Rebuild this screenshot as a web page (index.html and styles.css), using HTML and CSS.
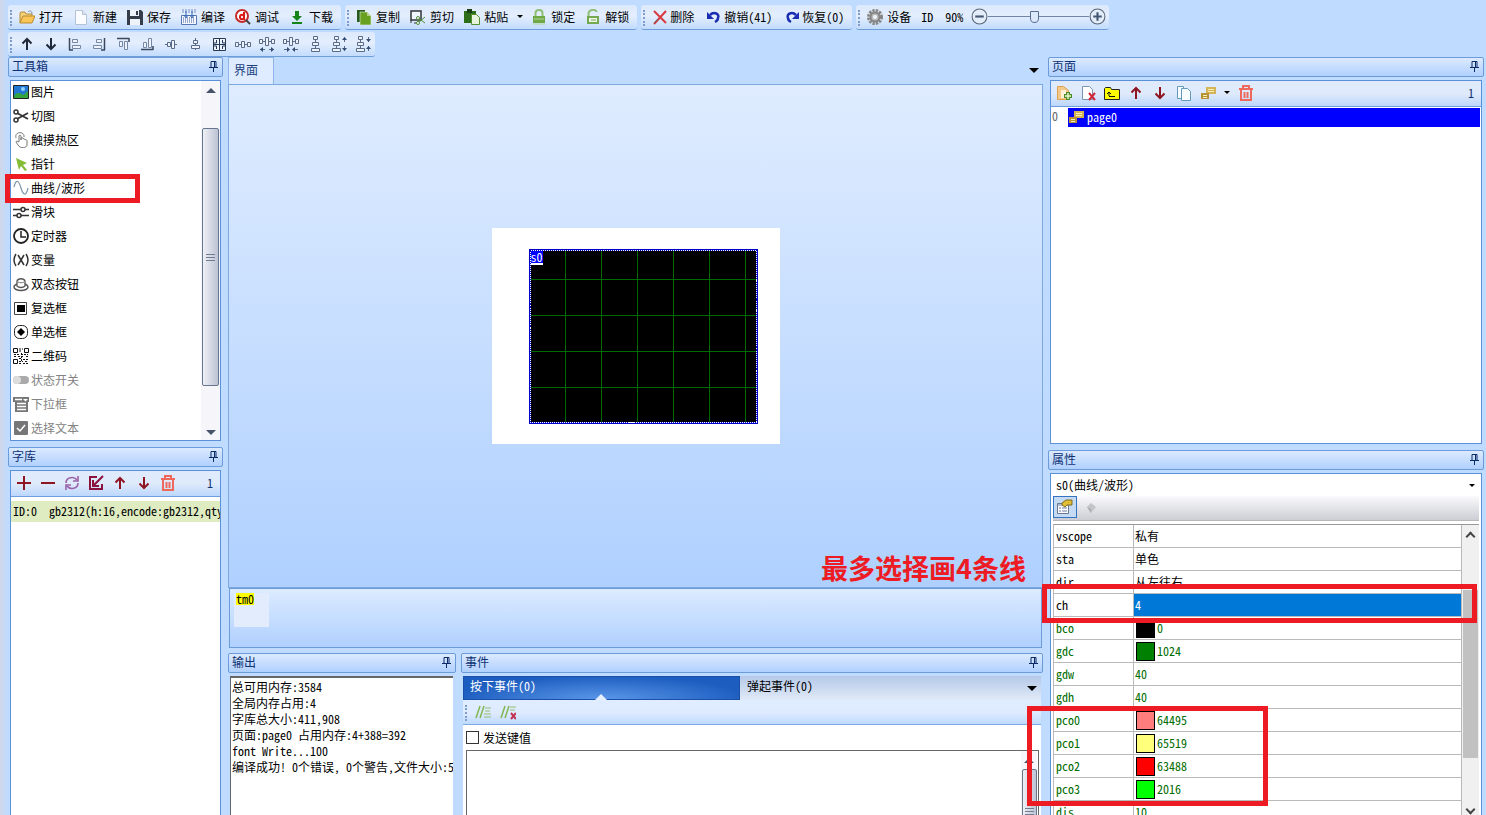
FILE: index.html
```html
<!DOCTYPE html>
<html lang="zh-CN">
<head>
<meta charset="utf-8">
<title>界面</title>
<link rel="stylesheet" href="styles.css">
</head>
<body>
<svg class="sprite" aria-hidden="true">
  <symbol id="pin" viewBox="0 0 9 11"><path d="M2 6V.5h5V6M0 6.500h9M4.500 7v4M5.500 1v5" fill="none" stroke="#0b2a66"/></symbol>
  <symbol id="open" viewBox="0 0 16 16"><path d="M1 14V4l1-1h4l1 2h6v3" fill="#f3d27c" stroke="#b98a2e"/><path d="M1 14l3-7h12l-3 7z" fill="#fbc658" stroke="#b98a2e"/><path d="M9 3c2-2 4-1 4 2" fill="none" stroke="#7d8fa8"/></symbol>
  <symbol id="new" viewBox="0 0 16 16"><path d="M2.500 1.500h7l4 4v10h-11z" fill="#fbfcff" stroke="#b5c1d6"/><path d="M9.500 1.500v4h4" fill="#dde6f4" stroke="#b5c1d6"/></symbol>
  <symbol id="save" viewBox="0 0 16 16"><path d="M0 1h14l2 2v13H0z" fill="#353c4a"/><path d="M3 1h9v6H3zM3 10h10v6H3z" fill="#eef3fa"/><path d="M9 2h2v4H9z" fill="#353c4a"/></symbol>
  <symbol id="compile" viewBox="0 0 16 16"><path d="M.5 6.500h15v9H.5z" fill="#f5f8ff" stroke="#5677b3"/><path d="M2 9h12M2 11h12M2 13h12" stroke="#385795" stroke-dasharray="1 1"/><path d="M1 1h14M1 3h14" stroke="#7290c5" stroke-dasharray="2 1"/><path d="M5 2v6M11 2v6M3 6l2 3 2-3M9 6l2 3 2-3" fill="none" stroke="#3567b5"/></symbol>
  <symbol id="debug" viewBox="0 0 16 16"><circle cx="7" cy="7" r="6" fill="#fff" stroke="#c42c2c" stroke-width="2"/><path d="M11 11l4 4" stroke="#444" stroke-width="2"/><path d="M9 3v8M9 8c0-3-4-3-4 0s4 3 4 0" fill="none" stroke="#dd1717" stroke-width="2"/></symbol>
  <symbol id="download" viewBox="0 0 16 16"><path d="M6 2h4v5h3l-5 5-5-5h3zM3 13h10v2H3z" fill="#148419"/></symbol>
  <symbol id="copy" viewBox="0 0 16 16"><path d="M1 1h8v12H1z" fill="#275b20"/><path d="M4 3h7l4 4v9H4z" fill="#68a020" stroke="#e7f1dc" stroke-width=".6"/><path d="M11 3v4h4" fill="#b3cf8c"/></symbol>
  <symbol id="cut" viewBox="0 0 16 16"><path d="M1 2h10v9H1z" fill="#eff6ff" stroke="#333" stroke-width="1.500"/><path d="M1 11v3M4 14h3" stroke="#333"/><path d="M8 9l7 5M8 14l7-6" stroke="#4e8b3b"/><circle cx="8" cy="9" r="1.500" fill="#fff" stroke="#4e8b3b"/><circle cx="8" cy="14" r="1.500" fill="#fff" stroke="#4e8b3b"/></symbol>
  <symbol id="paste" viewBox="0 0 16 16"><path d="M0 2h12v12H0z" fill="#2d6e19"/><path d="M3 0h5v4H3z" fill="#1b3f15"/><path d="M7.500 5.500h5l3 3v7h-8z" fill="#e8f5dc" stroke="#559132"/></symbol>
  <symbol id="lock" viewBox="0 0 16 16"><path d="M4.500 8V4c0-4 7-4 7 0v4" fill="none" stroke="#8ebf77" stroke-width="2"/><path d="M2 7h12v7H2z" fill="#6fa945"/><path d="M2 15h12M3 10h10" stroke="#b4d49e"/></symbol>
  <symbol id="unlock" viewBox="0 0 16 16"><path d="M3.500 7V4c1-4 8-4 8-1" fill="none" stroke="#8ebf77" stroke-width="2"/><path d="M3 8h10v6H3z" fill="#eef7e5" stroke="#74a852" stroke-width="2"/><path d="M6 11h5" stroke="#74a852"/></symbol>
  <symbol id="delete" viewBox="0 0 16 16"><path d="M2 2l12 12M14 2L2 15" stroke="#d83b3f" stroke-width="2"/><path d="M2 14l4-4" stroke="#666"/></symbol>
  <symbol id="undo" viewBox="0 0 16 16"><path d="M4 6c4-4 10-1 8 3 0 2-1 3-3 4" fill="none" stroke="#1b2db2" stroke-width="2.500"/><path d="M1 3v7h7z" fill="#1b2db2"/></symbol>
  <symbol id="redo" viewBox="0 0 16 16"><path d="M12 6C8 2 2 5 4 9c0 2 1 3 3 4" fill="none" stroke="#1b2db2" stroke-width="2.500"/><path d="M15 3v7H8z" fill="#1b2db2"/></symbol>
  <symbol id="gear" viewBox="0 0 16 16"><circle cx="8" cy="8" r="6.500" fill="none" stroke="#858585" stroke-width="3" stroke-dasharray="2.300 1.100"/><circle cx="8" cy="8" r="4.500" fill="#bbb" stroke="#858585" stroke-width="2"/><circle cx="8" cy="8" r="2" fill="#f1f4fa"/></symbol>
  <symbol id="minus" viewBox="0 0 16 16"><circle cx="8" cy="8" r="7" fill="#e3edf9" stroke="#596579"/><path d="M4 8h8" stroke="#445775" stroke-width="2"/></symbol>
  <symbol id="plus" viewBox="0 0 16 16"><circle cx="8" cy="8" r="7" fill="#e3edf9" stroke="#596579"/><path d="M4 8h8M8 4v8" stroke="#445775" stroke-width="2"/></symbol>
  <symbol id="up" viewBox="0 0 16 16"><path d="M8 14V3M3.500 7.500L8 3l4.500 4.500" fill="none" stroke="currentColor" stroke-width="2"/></symbol>
  <symbol id="down" viewBox="0 0 16 16"><path d="M8 2v11M3.500 8.500L8 13l4.500-4.500" fill="none" stroke="currentColor" stroke-width="2"/></symbol>
  <symbol id="al" viewBox="0 0 16 16"><path d="M2.500 2v12M2 14h4" stroke="#39485e" stroke-width="1.500"/><path d="M5.500 3.500h5v3h-5zM5.500 9.500h8v3h-8z" fill="#edf4ff" stroke="#7587a2"/></symbol>
  <symbol id="ar" viewBox="0 0 16 16"><path d="M13.500 2v12M10 14h4" stroke="#39485e" stroke-width="1.500"/><path d="M5.500 3.500h5v3h-5zM2.500 9.500h8v3h-8z" fill="#edf4ff" stroke="#7587a2"/></symbol>
  <symbol id="at" viewBox="0 0 16 16"><path d="M2 2.500h12M14 2v4" stroke="#39485e" stroke-width="1.500"/><path d="M4.500 5.500h3v5h-3zM9.500 5.500h3v8h-3z" fill="#edf4ff" stroke="#7587a2"/></symbol>
  <symbol id="ab" viewBox="0 0 16 16"><path d="M2 13.500h12M14 10v4" stroke="#39485e" stroke-width="1.500"/><path d="M4.500 6.500h3v5h-3zM9.500 2.500h3v9h-3z" fill="#edf4ff" stroke="#7587a2"/></symbol>
  <symbol id="ch" viewBox="0 0 16 16"><path d="M2 8.500h12" stroke="#596b86"/><path d="M4.500 6.500h3v4h-3zM8.500 4.500h3v8h-3z" fill="#edf4ff" stroke="#596b86"/></symbol>
  <symbol id="cv" viewBox="0 0 16 16"><path d="M8.500 2v12" stroke="#596b86"/><path d="M6.500 4.500h4v3h-4zM4.500 9.500h8v3h-8z" fill="#edf4ff" stroke="#596b86"/></symbol>
  <symbol id="size" viewBox="0 0 16 16"><path d="M2.500 2.500h12v12h-12z" fill="#edf4ff" stroke="#273952"/><path d="M3 8.500h11M8.500 3v11M5.500 4v3H3M11.500 4v3H14M5.500 13v-3H3M11.500 13v-3H14" fill="none" stroke="#273952"/></symbol>
  <symbol id="dh" viewBox="0 0 16 16"><path d="M0 8.500h16" stroke="#596b86"/><path d="M.5 6.500h3v4h-3zM6.500 5.500h3v6h-3zM12.500 6.500h3v4h-3z" fill="#edf4ff" stroke="#596b86"/></symbol>
  <symbol id="dho" viewBox="0 0 16 16"><path d="M0 5.500h16M1 13.500h5M10 13.500h5" stroke="#596b86"/><path d="M4 11v5l-3-2.500zM12 11v5l3-2.500z" fill="#334d74"/><path d="M.5 3.500h3v4h-3zM6.500 1.500h3v8h-3zM12.500 3.500h3v4h-3z" fill="#edf4ff" stroke="#596b86"/></symbol>
  <symbol id="dhi" viewBox="0 0 16 16"><path d="M0 5.500h16M1 13.500h5M10 13.500h5" stroke="#596b86"/><path d="M4 11v5l3-2.500zM12 11v5l-3-2.500z" fill="#334d74"/><path d="M.5 3.500h3v4h-3zM6.500 1.500h3v8h-3zM12.500 3.500h3v4h-3z" fill="#edf4ff" stroke="#596b86"/></symbol>
  <symbol id="dv" viewBox="0 0 16 16"><path d="M8.500 1v14" stroke="#596b86"/><path d="M6.500.5h4v3h-4zM5.500 6.500h6v3h-6zM4.500 12.500h8v3h-8z" fill="#edf4ff" stroke="#596b86"/></symbol>
  <symbol id="dvo" viewBox="0 0 16 16"><path d="M5.500 1v14M13.500 1v5M13.500 10v5" stroke="#596b86"/><path d="M11 4h5l-2.500-3zM11 12h5l-2.500 3z" fill="#334d74"/><path d="M3.500.5h4v3h-4zM2.500 6.500h6v3h-6zM1.500 12.500h8v3h-8z" fill="#edf4ff" stroke="#596b86"/></symbol>
  <symbol id="dvi" viewBox="0 0 16 16"><path d="M5.500 1v14M13.500 1v5M13.500 10v5" stroke="#596b86"/><path d="M11 3h5l-2.500 3zM11 13h5l-2.500-3z" fill="#334d74"/><path d="M3.500.5h4v3h-4zM2.500 6.500h6v3h-6zM1.500 12.500h8v3h-8z" fill="#edf4ff" stroke="#596b86"/></symbol>
  <symbol id="image" viewBox="0 0 16 16"><path d="M.5 1.500h15v13H.5z" fill="#2378d4" stroke="#222"/><path d="M1 14c0-6 6-6 9-3l5-4v7z" fill="#36a33d"/><circle cx="10" cy="5" r="2" fill="#90d4ff"/></symbol>
  <symbol id="scissors" viewBox="0 0 16 16"><path d="M4 5l11 6M4 11l11-6" stroke="#333" stroke-width="1.800"/><circle cx="3" cy="4" r="2" fill="none" stroke="#333" stroke-width="1.500"/><circle cx="3" cy="12" r="2" fill="none" stroke="#333" stroke-width="1.500"/></symbol>
  <symbol id="touch" viewBox="0 0 16 16"><path d="M6 10V4c0-1 2-1 2 0v4-2c1-1 2 0 2 1 1-1 2 0 2 1 1-1 2 0 2 1v4c0 3-7 4-9 0l-2-3c0-1 1-1 3 0M3 6c-2-7 9-7 8-1" fill="none" stroke="#777"/></symbol>
  <symbol id="pointer" viewBox="0 0 16 16"><path d="M3 2l11 5-4 2 4 5-2 1-4-5-2 4z" fill="#83bd36"/></symbol>
  <symbol id="wave" viewBox="0 0 16 16"><path d="M1 7C3-2 6 1 8 8s5 9 7 0" fill="none" stroke="#7e96a8" stroke-width="1.200"/></symbol>
  <symbol id="slider" viewBox="0 0 16 16"><path d="M0 5.500h8M12 5.500h4M0 11.500h4M8 11.500h8" stroke="#333" stroke-width="1.500"/><circle cx="10" cy="5.500" r="2" fill="#fff" stroke="#333" stroke-width="1.500"/><circle cx="6" cy="11.500" r="2" fill="#fff" stroke="#333" stroke-width="1.500"/></symbol>
  <symbol id="clock" viewBox="0 0 16 16"><circle cx="8" cy="8" r="7" fill="#fff" stroke="#222" stroke-width="1.800"/><path d="M8 3v6h5" fill="none" stroke="#222" stroke-width="1.500"/></symbol>
  <symbol id="var" viewBox="0 0 16 16"><path d="M3 2Q-1 8 3 14M13 2q4 6 0 12M5 3l6 10M11 3l-6 10" fill="none" stroke="#333" stroke-width="1.500"/></symbol>
  <symbol id="toggle" viewBox="0 0 16 16"><ellipse cx="8" cy="11" rx="7" ry="3.500" fill="#fff" stroke="#555" stroke-width="1.500"/><path d="M4 10V5c1-3 7-3 8 0v5c-2 2-6 2-8 0z" fill="#fff" stroke="#555" stroke-width="1.300"/><path d="M5 6c2 1 4 1 6 0" fill="none" stroke="#777"/></symbol>
  <symbol id="check" viewBox="0 0 16 16"><path d="M1.500 2.500h12v12h-12z" fill="#fff" stroke="#444"/><path d="M4 5h8v7H4z"/></symbol>
  <symbol id="radio" viewBox="0 0 16 16"><rect x="1.500" y="1.500" width="13" height="13" rx="5" fill="#fff" stroke="#222"/><path d="M8 4l4 4-4 4-4-4z"/><path d="M6 6h4v4H6z"/></symbol>
  <symbol id="qr" viewBox="0 0 16 16"><path d="M.5.500h4v4h-4zM11.500.5h4v4h-4zM.5 11.500h4v4h-4z" fill="none" stroke="#111"/><path d="M6 1h4M6 3h3M1 6.500h5M8 6.500h7M1 8.500h3M5 8.500h6M13 8.500h3M6 10.500h3M10 11.500h6M6 13.500h4M12 13.500h3M6 15.500h2M10 15.500h5M8.500 5v9" stroke="#111" stroke-dasharray="2 1"/></symbol>
  <symbol id="switch" viewBox="0 0 16 16"><rect x="0" y="4" width="16" height="8" rx="4" fill="#aaa"/><circle cx="4" cy="8" r="4" fill="#ddd"/></symbol>
  <symbol id="drop" viewBox="0 0 16 16"><path d="M0 1h16v5h-1v10H2V6H0z" fill="#777"/><path d="M2 3.500h7M4 7.500h9M4 10.500h9M4 13.500h9" stroke="#fff" stroke-width="1.500"/><path d="M10 3h5l-2.500 2.500z" fill="#fff"/></symbol>
  <symbol id="seltext" viewBox="0 0 16 16"><rect x="1" y="1" width="14" height="14" rx="1" fill="#777"/><path d="M4 8l3 3 5-6" fill="none" stroke="#fff" stroke-width="1.500"/></symbol>
  <symbol id="add" viewBox="0 0 16 16"><path d="M1 8h14M8 1v14" stroke="#8d1622" stroke-width="2"/></symbol>
  <symbol id="remove" viewBox="0 0 16 16"><path d="M1 8h14" stroke="#8d1622" stroke-width="2"/></symbol>
  <symbol id="refresh" viewBox="0 0 16 16"><path d="M2 8c0-6 8-7 11-3M14 8c0 6-8 7-11 3" fill="none" stroke="#9a61a8" stroke-width="1.600"/><path d="M14 1v5H9M2 15v-5h5" fill="none" stroke="#9a61a8" stroke-width="1.600"/></symbol>
  <symbol id="import" viewBox="0 0 16 16"><path d="M9 2H2v12h12V9M15 1L6 10M5 5v6h6" fill="none" stroke="#8b123c" stroke-width="2"/></symbol>
  <symbol id="trash" viewBox="0 0 16 16"><path d="M1 4h14M5 4V1h6v3M3 5v10h10V5M6.500 7v6M9.500 7v6" fill="none" stroke="#ee695c" stroke-width="2"/></symbol>
  <symbol id="pageadd" viewBox="0 0 16 16"><path d="M1.500 1.500h6l5 4v9h-11z" fill="#f5c989" stroke="#dda04f"/><path d="M5 5h5v8H5z" fill="#fff1d5"/><path d="M12 7v8M8 11h8" stroke="#4d8b2b" stroke-width="4"/><path d="M12 8v6M9 11h6" stroke="#e8f8cc" stroke-width="1.500"/></symbol>
  <symbol id="pagedel" viewBox="0 0 16 16"><path d="M2.500 1.500h7l3 3v10h-10z" fill="#fff" stroke="#7896b4"/><path d="M9 8l6 7M15 8l-6 7" stroke="#cf2638" stroke-width="2"/></symbol>
  <symbol id="folder" viewBox="0 0 16 16"><path d="M.5 14.500v-11l1-1h5l1 2h8v10z" fill="#ff0" stroke="#222"/><path d="M5 11V7M3 9l2-2 2 2M5 11.500h6" fill="none" stroke="#111"/></symbol>
  <symbol id="pages" viewBox="0 0 16 16"><path d="M1.500 1.500h6v12h-6z" fill="#f8fcff" stroke="#619abc"/><path d="M5.500 3.500h6l3 3v9h-9z" fill="#f8fcff" stroke="#619abc"/></symbol>
  <symbol id="layers" viewBox="0 0 16 16"><path d="M6 2h10v7H6z" fill="#d4b456"/><path d="M1 8h8v6H1z" fill="#b89236"/><path d="M8 4.500h6M8 6.500h6M3 10.500h4M3 12.500h4" stroke="#fff0b1"/></symbol>
  <symbol id="props" viewBox="0 0 16 16"><path d="M.5 4.500h11v10H.5z" fill="#fff" stroke="#6c7890"/><path d="M1 6h10M2 9h2M5 9h5M2 12h2M5 12h5" stroke="#6678a5"/><path d="M5 4l4-3h6v5h-5l-2 2-3-2z" fill="#e1bd35" stroke="#816a22"/></symbol>
  <symbol id="diamond" viewBox="0 0 16 16"><path d="M4 7l4-4 5 4-5 6z" fill="#c3c4c8"/><path d="M4 7l4 2v4zM8 9l5-2" fill="#aaa"/></symbol>
  <symbol id="comment" viewBox="0 0 16 16"><path d="M1 14L5 2M5 14L9 2" stroke="#81b750" stroke-width="1.500"/><path d="M10 4h6M10 7h5M9 10h7M9 13h7" stroke="#93bd70"/></symbol>
  <symbol id="uncomment" viewBox="0 0 16 16"><path d="M1 14L5 2M5 14L9 2" stroke="#81b750" stroke-width="1.500"/><path d="M10 3h6M10 6h5" stroke="#93bd70"/><path d="M11 9l5 6M16 9l-5 6" stroke="#c13350" stroke-width="2"/></symbol>
</svg>
<div class="app">
  <header class="bars">
    <div class="bar-row">
      <div class="bar">
        <button class="tool"><svg><use href="#open"/></svg>打开</button><button class="tool"><svg><use href="#new"/></svg>新建</button><button class="tool"><svg><use href="#save"/></svg>保存</button><button class="tool"><svg><use href="#compile"/></svg>编译</button><button class="tool"><svg><use href="#debug"/></svg>调试</button><button class="tool"><svg><use href="#download"/></svg>下载</button>
      </div>
      <div class="bar">
        <button class="tool"><svg><use href="#copy"/></svg>复制</button><button class="tool"><svg><use href="#cut"/></svg>剪切</button><button class="tool"><svg><use href="#paste"/></svg>粘贴</button><button class="more" aria-label="粘贴选项"><i class="caret small"></i></button><button class="tool"><svg><use href="#lock"/></svg>锁定</button><button class="tool"><svg><use href="#unlock"/></svg>解锁</button>
      </div>
      <div class="bar edit">
        <button class="tool"><svg><use href="#delete"/></svg>删除</button><button class="tool"><svg><use href="#undo"/></svg>撤销(41)</button><button class="tool"><svg><use href="#redo"/></svg>恢复(0)</button>
      </div>
      <div class="bar">
        <button class="tool"><svg><use href="#gear"/></svg>设备</button><button class="tool">ID</button><label class="zoom-label" for="zoom">90%</label>
        <button class="round" aria-label="缩小"><svg><use href="#minus"/></svg></button><input class="zoom" id="zoom" type="range" min="0" max="100" value="45"><button class="round" aria-label="放大"><svg><use href="#plus"/></svg></button>
      </div>
    </div>
    <div class="bar-row">
      <div class="bar align">
        <button aria-label="上移"><svg><use href="#up"/></svg></button><button aria-label="下移"><svg><use href="#down"/></svg></button><button aria-label="左对齐"><svg><use href="#al"/></svg></button><button aria-label="右对齐"><svg><use href="#ar"/></svg></button><button aria-label="顶对齐"><svg><use href="#at"/></svg></button><button aria-label="底对齐"><svg><use href="#ab"/></svg></button><button aria-label="水平居中"><svg><use href="#ch"/></svg></button><button aria-label="垂直居中"><svg><use href="#cv"/></svg></button><button aria-label="相同大小"><svg><use href="#size"/></svg></button><button aria-label="水平等距"><svg><use href="#dh"/></svg></button><button aria-label="增加水平间距"><svg><use href="#dho"/></svg></button><button aria-label="减少水平间距"><svg><use href="#dhi"/></svg></button><button aria-label="垂直等距"><svg><use href="#dv"/></svg></button><button aria-label="增加垂直间距"><svg><use href="#dvo"/></svg></button><button aria-label="减少垂直间距"><svg><use href="#dvi"/></svg></button>
      </div>
    </div>
  </header>
  <main class="work">
    <aside class="side">
      <h2 class="head">工具箱<svg><use href="#pin"/></svg></h2>
      <div class="box toolbox">
        <ul class="kit">
          <li><svg><use href="#image"/></svg>图片</li>
          <li><svg><use href="#scissors"/></svg>切图</li>
          <li><svg><use href="#touch"/></svg>触摸热区</li>
          <li><svg><use href="#pointer"/></svg>指针</li>
          <li><svg><use href="#wave"/></svg>曲线/波形<span class="mark mark-wave"></span></li>
          <li><svg><use href="#slider"/></svg>滑块</li>
          <li><svg><use href="#clock"/></svg>定时器</li>
          <li><svg><use href="#var"/></svg>变量</li>
          <li><svg><use href="#toggle"/></svg>双态按钮</li>
          <li><svg><use href="#check"/></svg>复选框</li>
          <li><svg><use href="#radio"/></svg>单选框</li>
          <li><svg><use href="#qr"/></svg>二维码</li>
          <li class="off"><svg><use href="#switch"/></svg>状态开关</li>
          <li class="off"><svg><use href="#drop"/></svg>下拉框</li>
          <li class="off"><svg><use href="#seltext"/></svg>选择文本</li>
        </ul>
        <div class="scroll"><i class="caret rise"></i><div class="thumb"><i class="ridges"></i></div><i class="caret"></i></div>
      </div>
      <h2 class="head">字库<svg><use href="#pin"/></svg></h2>
      <div class="box grow">
        <div class="strip">
          <button aria-label="添加字库"><svg><use href="#add"/></svg></button><button aria-label="移除字库"><svg><use href="#remove"/></svg></button><button aria-label="刷新"><svg><use href="#refresh"/></svg></button><button aria-label="导入"><svg><use href="#import"/></svg></button><button class="wine" aria-label="上移"><svg><use href="#up"/></svg></button><button class="wine" aria-label="下移"><svg><use href="#down"/></svg></button><button aria-label="清空"><svg><use href="#trash"/></svg></button>
          <span class="count">1</span>
        </div>
        <p class="font-row"><span>ID:0</span><span>gb2312(h:16,encode:gb2312,qty</span></p>
      </div>
    </aside>

    <section class="center">
      <div class="tabs"><button class="tab">界面</button><i class="caret"></i></div>
      <div class="stage">
        <div class="artboard">
          <div class="scope">
            <svg class="gridlines" viewBox="0 0 229 175" shape-rendering="crispEdges"><path d="M36.500 0v175M72.500 0v175M108.500 0v175M144.500 0v175M180.500 0v175M216.500 0v175M0 30.500h229M0 66.500h229M0 102.500h229M0 138.500h229" stroke="#006a00" fill="none"/><path d="M1 1h227v173H1z" fill="none" stroke="#0000c8" stroke-width="2"/><path d="M1.500 1.500h226v172H1.500z" fill="none" stroke="#fff" stroke-dasharray="1 1"/></svg>
            <span class="tag">s0</span>
          </div>
        </div>
        <strong class="note">最多选择画4条线</strong>
      </div>
      <div class="tray"><div class="timer"><span>tm0</span></div></div>
      <div class="lower">
        <section class="output">
          <h2 class="head">输出<svg><use href="#pin"/></svg></h2>
          <div class="log"><p>总可用内存:3584</p><p>全局内存占用:4</p><p>字库总大小:411,908</p><p>页面:page0 占用内存:4+388=392</p><p>font Write...100</p><p>编译成功! 0个错误, 0个警告,文件大小:5</p></div>
        </section>
        <section class="events">
          <h2 class="head">事件<svg><use href="#pin"/></svg></h2>
          <div class="event-body">
            <div class="event-tabs"><button class="current">按下事件(0)</button><button>弹起事件(0)</button><i class="caret"></i></div>
            <div class="code-strip"><button aria-label="注释"><svg><use href="#comment"/></svg></button><button aria-label="取消注释"><svg><use href="#uncomment"/></svg></button></div>
            <label class="send"><input type="checkbox">发送键值</label>
            <div class="editor"><textarea aria-label="事件代码"></textarea><div class="scroll"><i class="caret rise"></i><div class="thumb"><i class="ridges"></i></div></div></div>
          </div>
        </section>
      </div>
    </section>

    <aside class="side">
      <h2 class="head">页面<svg><use href="#pin"/></svg></h2>
      <div class="box pages">
        <div class="strip">
          <button aria-label="添加页面"><svg><use href="#pageadd"/></svg></button><button aria-label="删除页面"><svg><use href="#pagedel"/></svg></button><button aria-label="导入页面"><svg><use href="#folder"/></svg></button><button class="wine" aria-label="上移"><svg><use href="#up"/></svg></button><button class="wine" aria-label="下移"><svg><use href="#down"/></svg></button><button aria-label="复制页面"><svg><use href="#pages"/></svg></button><button aria-label="页面类型"><svg><use href="#layers"/></svg></button><button class="more" aria-label="页面选项"><i class="caret small"></i></button><button aria-label="清空"><svg><use href="#trash"/></svg></button>
          <span class="count">1</span>
        </div>
        <div class="page-row"><span class="index">0</span><span class="name"><svg><use href="#layers"/></svg>page0</span></div>
      </div>
      <h2 class="head">属性<svg><use href="#pin"/></svg></h2>
      <div class="box grow props">
        <div class="pick"><select aria-label="控件"><option>s0(曲线/波形)</option></select><i class="caret small"></i></div>
        <div class="prop-strip"><button class="pressed" aria-label="属性"><svg><use href="#props"/></svg></button><button aria-label="事件"><svg><use href="#diamond"/></svg></button></div>
        <div class="prop-view">
          <table>
            <tr><th scope="row">vscope</th><td>私有</td></tr>
            <tr><th scope="row">sta</th><td>单色</td></tr>
            <tr><th scope="row">dir</th><td>从左往右</td></tr>
            <tr class="chosen"><th scope="row">ch</th><td>4</td></tr>
            <tr class="green"><th scope="row">bco</th><td><i class="swatch black"></i>0</td></tr>
            <tr class="green"><th scope="row">gdc</th><td><i class="swatch forest"></i>1024</td></tr>
            <tr class="green"><th scope="row">gdw</th><td>40</td></tr>
            <tr class="green"><th scope="row">gdh</th><td>40</td></tr>
            <tr class="green"><th scope="row">pco0</th><td><i class="swatch pink"></i>64495</td></tr>
            <tr class="green"><th scope="row">pco1</th><td><i class="swatch yellow"></i>65519</td></tr>
            <tr class="green"><th scope="row">pco2</th><td><i class="swatch red"></i>63488</td></tr>
            <tr class="green"><th scope="row">pco3</th><td><i class="swatch lime"></i>2016</td></tr>
            <tr class="green"><th scope="row">dis</th><td>10</td></tr>
          </table>
          <div class="flat-scroll"><i class="chev"></i><div class="flat-thumb"></div><i class="chev fall"></i></div>
        </div>
      </div>
    </aside>
  </main>
  <span class="mark mark-channel"></span>
  <span class="mark mark-colors"></span>
</div>
</body>
</html>
```
FILE: styles.css
```css
* { box-sizing: border-box; font-feature-settings: "hwid" 1; }
body { margin: 0; background: #bfdbff; color: #000; font: 12px/16px "Noto Sans CJK SC", sans-serif; }
button, input, select, textarea { font: inherit; color: inherit; margin: 0; padding: 0; border: 0; background: none; }
h2, p, ul { margin: 0; padding: 0; font-weight: normal; }
svg { display: block; width: 16px; height: 16px; flex: none; }
.sprite { position: absolute; width: 0; height: 0; }
.app { position: relative; display: flex; flex-direction: column; height: 100vh; overflow: hidden; padding: 5px 2px 0 8px; background: linear-gradient(90deg, #cfd8e8 0, #bfdbff 8px); }

.bars { display: flex; flex-direction: column; gap: 2px; flex: none; }
.bar-row { display: flex; gap: 4px; }
.bar { position: relative; display: flex; align-items: center; height: 25px; padding: 0 3px 1px 6px; border-bottom: 1px solid #6f9dd9; border-radius: 3px; background: linear-gradient(#dce9fc, #e4eefd 45%, #c3dcfd); white-space: nowrap; }
.bar::before, .code-strip::before { content: ""; position: absolute; left: 2px; top: 5px; bottom: 3px; border-left: 2px dotted #7e9dcc; }
.tool { display: flex; align-items: center; gap: 4px; padding: 0 5px; }
.edit .tool { gap: 2px; padding-right: 7px; }
.edit { padding-right: 1px; }
.more { display: flex; justify-content: center; width: 13px; }
.zoom-label { padding: 0 8px 0 7px; }
.round svg { width: 17px; height: 17px; }
.zoom { appearance: none; width: 101px; height: 16px; background: linear-gradient(#7186a6, #7186a6) center / 100% 1px no-repeat; }
.zoom::-webkit-slider-thumb { appearance: none; width: 9px; height: 12px; border: 1px solid #596f91; border-radius: 1px 1px 5px 5px; background: #dce9fa; }
.align { padding-left: 7px; padding-right: 0; }
.align button { display: flex; justify-content: center; width: 24px; color: #20293a; }

.caret { flex: none; width: 0; height: 0; border: 5px solid transparent; border-top-color: #000; border-bottom: 0; }
.caret.small { border-width: 3px 3px 0; }
.caret.rise { border-top: 0; border-bottom: 5px solid #46536b; }

.work { flex: 1; min-height: 0; display: grid; grid-template-columns: 215px minmax(0, 1fr) 436px; gap: 5px; }
.side { display: flex; flex-direction: column; min-width: 0; min-height: 0; }
.head { display: flex; flex: none; align-items: center; justify-content: space-between; height: 20px; padding: 0 4px 2px 3px; border: 1px solid #6b9bd8; border-radius: 2px; background: linear-gradient(#dceafe, #b0d0ff); color: #0f3273; font-size: 12px; }
.head svg { width: 9px; height: 11px; }
.box { margin: 3px 2px 0; border: 1px solid #5b91d8; background: #fff; }
.grow { flex: 1; min-height: 0; border-bottom: 0; }
.toolbox { display: flex; height: 361px; margin-bottom: 6px; }
.kit { flex: 1; list-style: none; }
.kit li { position: relative; display: flex; align-items: center; gap: 2px; height: 24px; padding: 0 0 2px 2px; }
.kit .off { color: #838383; }
.scroll { display: flex; flex-direction: column; align-items: center; width: 19px; padding: 7px 0 5px; background: #f6f6fa; }
.thumb { display: flex; align-items: center; justify-content: center; width: 17px; height: 258px; margin: 35px 0 auto; border: 1px solid #68758f; border-radius: 2px; background: linear-gradient(90deg, #eef0f6, #bdc3d4); }
.ridges { width: 9px; height: 7px; background: repeating-linear-gradient(#727c91 0 1px, transparent 1px 3px); }
.toolbox .caret { border-top-color: #46536b; }

.strip { display: flex; align-items: center; height: 26px; padding: 0 7px 2px 1px; border-bottom: 1px solid #6f9dd9; background: linear-gradient(#dfebfd, #dfeafb 50%, #bcd7fc); color: #0f3273; }
.strip button { display: flex; justify-content: center; width: 24px; }
.strip .more { width: 14px; }
.strip .wine { color: #8d1622; }
.count { margin-left: auto; }
.font-row { display: flex; gap: 12px; height: 21px; margin-top: 4px; padding-left: 2px; background: #dfebc0; line-height: 20px; overflow: hidden; white-space: nowrap; }

.center { display: flex; flex-direction: column; min-width: 0; min-height: 0; }
.tabs { display: flex; justify-content: space-between; align-items: center; height: 27px; padding-right: 4px; }
.tab { align-self: stretch; width: 46px; padding: 0 10px 3px 0; border: 1px solid #8fb6ea; border-bottom: 0; background: #dfecff; color: #1c427f; }
.stage { position: relative; flex: 1; min-height: 0; display: flex; align-items: center; justify-content: center; border: 1px solid #7da8e0; background: linear-gradient(#dfecff, #afd0ff); }
.artboard { width: 288px; height: 216px; padding: 21px 37px; background: #fff; }
.scope { position: relative; width: 229px; height: 175px; background: #000; }
.gridlines { width: 229px; height: 175px; }
.tag { position: absolute; left: 2px; top: 2px; height: 14px; border-bottom: 2px solid #fff; background: #00f; color: #fff; line-height: 12px; }
.note { position: absolute; right: 16px; bottom: 2px; color: #ed1c24; font-size: 27px; line-height: 34px; font-feature-settings: normal; }
.tray { flex: none; height: 60px; margin: 0 1px; padding: 4px; border: 1px solid #6b9bd8; background: linear-gradient(#dcebff, #b0d0ff); }
.timer { display: flex; align-items: flex-start; width: 35px; height: 34px; padding: 0 2px; background: #e2ecfc; line-height: 12px; }
.timer span { background: #ff0; }
.lower { flex: none; display: grid; grid-template-columns: 228px minmax(0, 1fr); gap: 5px; height: 162px; margin-top: 5px; }
.output, .events { display: flex; flex-direction: column; min-width: 0; min-height: 0; }
.log { flex: 1; margin: 3px 3px 0 2px; padding: 1px 0 0 1px; border: 1px solid #666; border-width: 2px 0 0 1px; background: #fff; white-space: nowrap; overflow: hidden; }
.event-body { flex: 1; min-height: 0; display: flex; flex-direction: column; margin: 3px 2px 0; background: #fff; }
.event-tabs { position: relative; display: grid; grid-template-columns: 277px 1fr auto; align-items: center; height: 24px; padding-right: 4px; background: linear-gradient(#b5c9e8, #e0e9f8); }
.event-tabs button { height: 24px; padding: 0 7px 4px; text-align: left; }
.event-tabs .current { padding-left: 6px; border: 1px solid #1b50aa; background: radial-gradient(ellipse at 50% 100%, #5a97e9, #1d5dbf 75%); color: #fff; }
.event-tabs::after { content: ""; position: absolute; left: 132px; bottom: 0; border: 6px solid transparent; border-top: 0; border-bottom-color: #e5f0ff; }
.code-strip { position: relative; display: flex; flex: none; align-items: center; gap: 9px; height: 25px; padding-left: 12px; border-bottom: 1px solid #7da8e0; background: linear-gradient(#e0edff, #deeaff 55%, #bfdaff); }
.send { display: flex; flex: none; align-items: center; gap: 4px; height: 25px; padding-left: 3px; }
.send input { appearance: none; width: 13px; height: 13px; border: 1px solid #333; background: #fff; }
.editor { flex: 1; min-height: 0; display: flex; margin: 0 2px 0 3px; padding-right: 1px; border: 1px solid #666; border-bottom: 0; overflow: hidden; }
.editor textarea { flex: 1; min-width: 0; resize: none; outline: 0; }
.editor .scroll { width: 16px; flex: none; }
.editor .thumb { flex: none; width: 15px; height: 84px; margin-top: 6px; }

.pages { height: 364px; margin-bottom: 6px; }
.page-row { display: flex; height: 19px; margin: 1px 1px 0; line-height: 16px; }
.index { width: 16px; color: #666; }
.name { flex: 1; display: flex; align-items: center; gap: 3px; padding-bottom: 2px; background: #00f; color: #fff; }
.props { display: flex; flex-direction: column; padding: 0 2px; }
.pick { display: flex; align-items: center; height: 22px; padding: 0 4px 0 3px; }
.pick select { appearance: none; flex: 1; outline: 0; }
.prop-strip { display: flex; height: 25px; border-bottom: 1px solid #b8b8bd; background: linear-gradient(#fafafc, #cdced5); }
.prop-strip button { display: flex; align-items: center; justify-content: center; width: 24px; height: 24px; margin-right: 2px; }
.prop-strip .pressed { height: 22px; border: 1px solid #3474c2; background: #c5dbf3; }
.prop-view { flex: 1; min-height: 0; display: flex; margin-top: 3px; border-top: 1px solid #999; border-left: 1px solid #bbb; overflow: hidden; }
.prop-view table { flex: 1; align-self: flex-start; border-collapse: separate; border-spacing: 0; table-layout: fixed; }
.prop-view th, .prop-view td { height: 23px; padding: 1px 2px; border-bottom: 1px solid #b9b9b9; font-weight: normal; text-align: left; line-height: 20px; }
.prop-view td { padding-left: 1px; }
.prop-view th { width: 80px; border-right: 1px solid #b9b9b9; }
.green { color: #006b00; }
.chosen td { background: #0078d7; color: #fff; }
.swatch { display: inline-block; width: 19px; height: 19px; margin: 1px 2px 0 1px; border: 1px solid #000; vertical-align: top; }
.black { background: #000; }
.forest { background: #008000; }
.pink { background: #ff7d7d; }
.yellow { background: #ffff7b; }
.red { background: #f00; }
.lime { background: #0f0; }
.flat-scroll { flex: none; display: flex; flex-direction: column; align-items: center; width: 18px; padding-top: 8px; border-left: 1px solid #b9b9b9; background: #f0f0f0; }
.flat-thumb { width: 15px; height: 168px; margin: 50px 0 auto; background: #c1c1c1; }
.chev { width: 7px; height: 7px; flex: none; border: solid #444; border-width: 2px 0 0 2px; transform: rotate(45deg); }
.chev.fall { transform: rotate(225deg); margin-bottom: 2px; }

.mark { position: absolute; border: 5px solid #ed1c24; pointer-events: none; }
.mark-wave { left: -6px; top: -3px; width: 135px; height: 29px; }
.mark-channel { right: 9px; top: 584px; width: 435px; height: 39px; }
.mark-colors { right: 218px; top: 706px; width: 241px; height: 100px; }
```
